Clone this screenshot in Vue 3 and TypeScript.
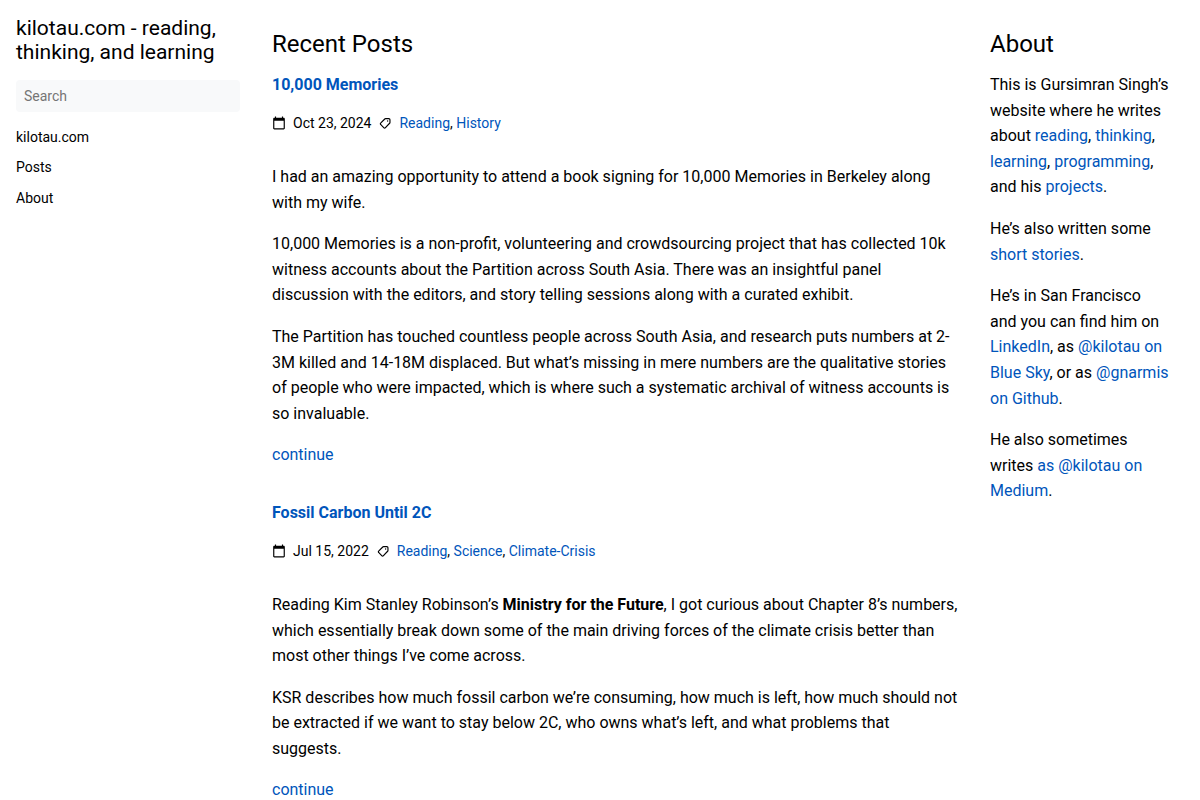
<script setup lang="ts">
interface Span {
  text: string
  kind?: 'link' | 'strong'
}
interface Post {
  title: string
  date: string
  tags: string[]
  body: Span[][]
}

const menu: string[] = ['kilotau.com', 'Posts', 'About']

const posts: Post[] = [
  {
    title: '10,000 Memories',
    date: 'Oct 23, 2024',
    tags: ['Reading', 'History'],
    body: [
      [{ text: 'I had an amazing opportunity to attend a book signing for 10,000 Memories in Berkeley along with my wife.' }],
      [{ text: '10,000 Memories is a non-profit, volunteering and crowdsourcing project that has collected 10k witness accounts about the Partition across South Asia. There was an insightful panel discussion with the editors, and story telling sessions along with a curated exhibit.' }],
      [{ text: 'The Partition has touched countless people across South Asia, and research puts numbers at 2-3M killed and 14-18M displaced. But what’s missing in mere numbers are the qualitative stories of people who were impacted, which is where such a systematic archival of witness accounts is so invaluable.' }],
    ],
  },
  {
    title: 'Fossil Carbon Until 2C',
    date: 'Jul 15, 2022',
    tags: ['Reading', 'Science', 'Climate-Crisis'],
    body: [
      [
        { text: 'Reading Kim Stanley Robinson’s ' },
        { text: 'Ministry for the Future', kind: 'strong' },
        { text: ', I got curious about Chapter 8’s numbers, which essentially break down some of the main driving forces of the climate crisis better than most other things I’ve come across.' },
      ],
      [{ text: 'KSR describes how much fossil carbon we’re consuming, how much is left, how much should not be extracted if we want to stay below 2C, who owns what’s left, and what problems that suggests.' }],
    ],
  },
]

const about: Span[][] = [
  [
    { text: 'This is Gursimran Singh’s website where he writes about ' },
    { text: 'reading', kind: 'link' },
    { text: ', ' },
    { text: 'thinking', kind: 'link' },
    { text: ', ' },
    { text: 'learning', kind: 'link' },
    { text: ', ' },
    { text: 'programming', kind: 'link' },
    { text: ', and his ' },
    { text: 'projects', kind: 'link' },
    { text: '.' },
  ],
  [
    { text: 'He’s also written some ' },
    { text: 'short stories', kind: 'link' },
    { text: '.' },
  ],
  [
    { text: 'He’s in San Francisco and you can find him on ' },
    { text: 'LinkedIn', kind: 'link' },
    { text: ', as ' },
    { text: '@kilotau on Blue Sky', kind: 'link' },
    { text: ', or as ' },
    { text: '@gnarmis on Github', kind: 'link' },
    { text: '.' },
  ],
  [
    { text: 'He also sometimes writes ' },
    { text: 'as @kilotau on Medium', kind: 'link' },
    { text: '.' },
  ],
]
</script>

<template>
  <div class="layout">
    <aside class="menu">
      <h2 class="brand"><a href="#">kilotau.com - reading, thinking, and learning</a></h2>
      <input class="search" type="text" placeholder="Search" aria-label="Search" />
      <nav>
        <ul>
          <li v-for="item in menu" :key="item"><a href="#">{{ item }}</a></li>
        </ul>
      </nav>
    </aside>

    <main class="page">
      <section class="recent">
        <h2>Recent Posts</h2>
        <article v-for="post in posts" :key="post.title" class="post">
          <h3><a href="#">{{ post.title }}</a></h3>
          <div class="meta">
            <svg class="icon" viewBox="0 0 24 24" aria-hidden="true">
              <path d="M20 3h-1V1h-2v2H7V1H5v2H4c-1.100 0-2 .9-2 2v16c0 1.100.9 2 2 2h16c1.100 0 2-.9 2-2V5c0-1.100-.9-2-2-2zm0 18H4V8h16v13z" />
            </svg>
            <span>{{ post.date }}</span>
            <svg class="icon" viewBox="0 0 24 24" aria-hidden="true">
              <path class="outline" d="M13 4.500h5.500a2 2 0 0 1 2 2V11a2 2 0 0 1-.6 1.400l-7.500 7.800a1.500 1.500 0 0 1-2.200 0l-5.700-5.700a1.500 1.500 0 0 1 0-2.200l7.100-7.200a2 2 0 0 1 1.400-.6z" />
              <circle cx="16.500" cy="8.500" r="1.200" />
            </svg>
            <span><template v-for="(tag, i) in post.tags" :key="tag"><template v-if="i > 0">, </template><a href="#">{{ tag }}</a></template></span>
          </div>
          <p v-for="(para, i) in post.body" :key="i"><template v-for="(s, j) in para" :key="j"><strong v-if="s.kind === 'strong'">{{ s.text }}</strong><template v-else>{{ s.text }}</template></template></p>
          <p><a href="#">continue</a></p>
        </article>
      </section>

      <section class="about">
        <h2>About</h2>
        <p v-for="(para, i) in about" :key="i"><template v-for="(s, j) in para" :key="j"><a v-if="s.kind === 'link'" href="#">{{ s.text }}</a><template v-else>{{ s.text }}</template></template></p>
      </section>
    </main>
  </div>
</template>

<style>
html {
  scrollbar-width: none;
}
body {
  background: #fff;
}
</style>

<style scoped>
.layout {
  display: flex;
  max-width: 1280px;
  margin: 0 auto;
  color: #000;
  font-family: Roboto, "Liberation Sans", sans-serif;
  font-size: 16px;
  line-height: 1.6;
}
a {
  color: #0055bb;
  text-decoration: none;
}
h2,
h3,
p,
ul {
  margin: 0;
}
.menu {
  flex: 0 0 256px;
  box-sizing: border-box;
  padding: 16px;
  font-size: 14px;
}
.menu a {
  color: inherit;
}
.brand {
  font-size: 21px;
  font-weight: 400;
  line-height: 24px;
}
.search {
  display: block;
  box-sizing: border-box;
  width: 100%;
  height: 32px;
  margin: 16px 0 14px;
  padding: 8px;
  border: 0;
  border-radius: 4px;
  background: #f8f9fa;
  color: #000;
  font: inherit;
}
.search::placeholder {
  color: #757575;
}
.menu ul {
  display: grid;
  gap: 8px;
  padding: 0;
  list-style: none;
}
.page {
  flex: 1;
  min-width: 0;
  display: flex;
  align-items: flex-start;
  gap: 32px;
  padding: 32px 30px 0 16px;
}
.recent {
  flex: 1;
  min-width: 0;
}
.about {
  flex: 0 0 180px;
}
.page h2 {
  margin-bottom: 16px;
  font-size: 24px;
  font-weight: 400;
  line-height: 24px;
}
.post h3 {
  font-size: 16px;
  font-weight: 700;
}
.post + .post {
  margin-top: 32px;
}
.meta {
  display: flex;
  align-items: center;
  gap: 7px;
  margin: 14px 0 30px;
  font-size: 14px;
}
.icon {
  width: 14px;
  height: 14px;
  fill: currentColor;
}
.outline {
  fill: none;
  stroke: currentColor;
  stroke-width: 2;
}
p + p {
  margin-top: 16px;
}
</style>
